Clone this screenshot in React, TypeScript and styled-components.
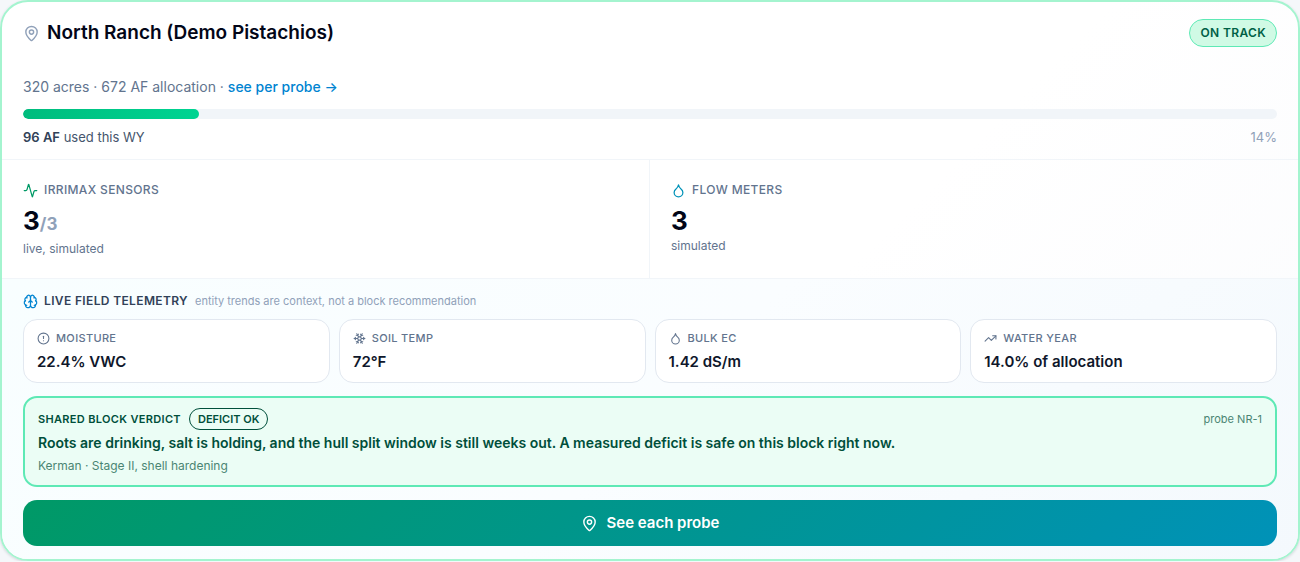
import React from "react";
import styled, { createGlobalStyle, css } from "styled-components";
import { Activity, Brain, CircleAlert, Droplet, MapPin, Snowflake, TrendingUp } from "lucide-react";

const GlobalStyle = createGlobalStyle`
  *, *::before, *::after { box-sizing: border-box; }
  body {
    margin: 0;
    background: #f5f7fa;
    font-family: Inter, "Liberation Sans", sans-serif;
    color: #0f172b;
    -webkit-font-smoothing: antialiased;
  }
  h2, h3, p, dl, dt, dd { margin: 0; }
`;

const Card = styled.article`
  border: 2px solid #a4f4cf;
  border-radius: 28px;
  background: linear-gradient(135deg, #ffffff 0%, #ffffff 60%, #fafbfd 100%);
  box-shadow: 0 1px 3px rgba(15, 23, 43, 0.16);
  overflow: hidden;
`;

const Summary = styled.header`
  padding: 17px 21px 12px;
`;

const Spread = styled.div`
  display: flex;
  align-items: center;
  justify-content: space-between;
  gap: 16px;
`;

const Title = styled.h2`
  display: flex;
  align-items: center;
  gap: 7px;
  color: #020618;
  font-size: 19px;
  line-height: 28px;
  font-weight: 600;
  svg { color: #90a1b9; }
`;

const StatusPill = styled.span`
  padding: 0 10px;
  border: 1px solid #5ee9b5;
  border-radius: 14px;
  background: #d0fae5;
  color: #006045;
  font-size: 12px;
  line-height: 26px;
  font-weight: 600;
  letter-spacing: 0.03em;
`;

const Allocation = styled.p`
  margin-top: 29px;
  color: #62748e;
  font-size: 14px;
  line-height: 22px;
`;

const ProbeLink = styled.a`
  color: #0084d1;
  font-weight: 500;
  text-decoration: none;
`;

const Track = styled.div`
  height: 10px;
  margin: 11px 0 8px;
  border-radius: 5px;
  background: #f1f5f9;
  overflow: hidden;
`;

const Fill = styled.div`
  height: 100%;
  border-radius: 5px;
  background: linear-gradient(90deg, #00bc7d, #00d492);
`;

const Usage = styled(Spread)`
  color: #45556c;
  font-size: 13px;
  line-height: 20px;
  strong { color: #314158; font-weight: 600; }
`;

const Percent = styled.span`
  color: #90a1b9;
`;

const Devices = styled.section`
  display: grid;
  grid-template-columns: 1fr 1fr;
  border-top: 1px solid #f1f5f9;
  border-bottom: 1px solid #f1f5f9;
`;

const Device = styled.div`
  padding: 20px 21px;
  &:first-child { border-right: 1px solid #f1f5f9; }
`;

const label = css`
  display: flex;
  align-items: center;
  gap: 6px;
  font-weight: 500;
  letter-spacing: 0.03em;
`;

const DeviceLabel = styled.h3<{ $tone: string }>`
  ${label}
  color: #62748e;
  font-size: 12px;
  line-height: 20px;
  svg { color: ${(p) => p.$tone}; }
`;

const Count = styled.p`
  margin-top: 5px;
  color: #020618;
  font-size: 26px;
  line-height: 32px;
  font-weight: 700;
  span { color: #90a1b9; font-size: 17px; }
`;

const Caption = styled.p`
  color: #62748e;
  font-size: 12px;
  line-height: 18px;
`;

const Telemetry = styled.section`
  display: flex;
  flex-direction: column;
  padding: 12px 21px 13px;
  background: linear-gradient(135deg, #f8feff 0%, #fafdff 50%, #f4f9fd 100%);
`;

const TelemetryHead = styled.div`
  display: flex;
  align-items: center;
  gap: 7px;
  line-height: 20px;
`;

const TelemetryTitle = styled.h3`
  ${label}
  color: #314158;
  font-size: 12px;
  font-weight: 600;
  svg { color: #0084d1; }
`;

const Note = styled.span`
  color: #90a1b9;
  font-size: 11px;
`;

const Readings = styled.dl`
  display: grid;
  grid-template-columns: repeat(4, 1fr);
  gap: 9px;
  margin-top: 8px;
`;

const Reading = styled.div`
  padding: 9px 13px;
  border: 1px solid #e2e8f0;
  border-radius: 14px;
  background: #fff;
  dt {
    ${label}
    color: #62748e;
    font-size: 11px;
    line-height: 18px;
  }
  dd {
    margin-top: 4px;
    font-size: 15px;
    line-height: 22px;
    font-weight: 600;
  }
`;

const Verdict = styled.section`
  margin-top: 13px;
  padding: 10px 13px;
  border: 2px solid #5ee9b5;
  border-radius: 14px;
  background: #ebfdf5;
  color: #004f3b;
`;

const VerdictHead = styled.div`
  display: flex;
  align-items: center;
  gap: 8px;
`;

const VerdictTitle = styled.h3`
  font-size: 11px;
  font-weight: 600;
  letter-spacing: 0.03em;
`;

const VerdictPill = styled.span`
  padding: 0 8px;
  border: 1px solid #004f3b;
  border-radius: 11px;
  font-size: 11px;
  line-height: 20px;
  font-weight: 600;
`;

const ProbeName = styled.span`
  color: #4a8573;
  font-size: 11px;
`;

const VerdictText = styled.p`
  margin-top: 2px;
  font-size: 14px;
  line-height: 22px;
  font-weight: 600;
`;

const VerdictStage = styled.p`
  margin-top: 3px;
  color: #4a8573;
  font-size: 12px;
  line-height: 18px;
`;

const ProbeButton = styled.button`
  display: flex;
  align-items: center;
  justify-content: center;
  gap: 9px;
  margin-top: 13px;
  padding: 12px;
  border: 0;
  border-radius: 14px;
  background: linear-gradient(135deg, #009966, #0092b8);
  color: #fff;
  font: 600 15px/22px Inter, "Liberation Sans", sans-serif;
  cursor: pointer;
`;

const readings = [
  { name: "MOISTURE", value: "22.4% VWC", Icon: CircleAlert },
  { name: "SOIL TEMP", value: "72°F", Icon: Snowflake },
  { name: "BULK EC", value: "1.42 dS/m", Icon: Droplet },
  { name: "WATER YEAR", value: "14.0% of allocation", Icon: TrendingUp },
];

export default function App() {
  const used = 14;
  return (
    <>
      <GlobalStyle />
      <Card>
        <Summary>
          <Spread>
            <Title><MapPin size={17} strokeWidth={2} />North Ranch (Demo Pistachios)</Title>
            <StatusPill>ON TRACK</StatusPill>
          </Spread>
          <Allocation>
            320 acres · 672 AF allocation · <ProbeLink href="#probes">see per probe →</ProbeLink>
          </Allocation>
          <Track><Fill style={{ width: `${used}%` }} /></Track>
          <Usage>
            <span><strong>96 AF</strong> used this WY</span>
            <Percent>{used}%</Percent>
          </Usage>
        </Summary>
        <Devices>
          <Device>
            <DeviceLabel $tone="#009966"><Activity size={15} />IRRIMAX SENSORS</DeviceLabel>
            <Count>3<span>/3</span></Count>
            <Caption>live, simulated</Caption>
          </Device>
          <Device>
            <DeviceLabel $tone="#0092b8"><Droplet size={15} />FLOW METERS</DeviceLabel>
            <Count>3</Count>
            <Caption>simulated</Caption>
          </Device>
        </Devices>
        <Telemetry>
          <TelemetryHead>
            <TelemetryTitle><Brain size={15} />LIVE FIELD TELEMETRY</TelemetryTitle>
            <Note>entity trends are context, not a block recommendation</Note>
          </TelemetryHead>
          <Readings>
            {readings.map(({ name, value, Icon }) => (
              <Reading key={name}>
                <dt><Icon size={13} />{name}</dt>
                <dd>{value}</dd>
              </Reading>
            ))}
          </Readings>
          <Verdict>
            <Spread>
              <VerdictHead>
                <VerdictTitle>SHARED BLOCK VERDICT</VerdictTitle>
                <VerdictPill>DEFICIT OK</VerdictPill>
              </VerdictHead>
              <ProbeName>probe NR-1</ProbeName>
            </Spread>
            <VerdictText>
              Roots are drinking, salt is holding, and the hull split window is still weeks out. A measured deficit is safe on this block right now.
            </VerdictText>
            <VerdictStage>Kerman · Stage II, shell hardening</VerdictStage>
          </Verdict>
          <ProbeButton type="button"><MapPin size={17} />See each probe</ProbeButton>
        </Telemetry>
      </Card>
    </>
  );
}
